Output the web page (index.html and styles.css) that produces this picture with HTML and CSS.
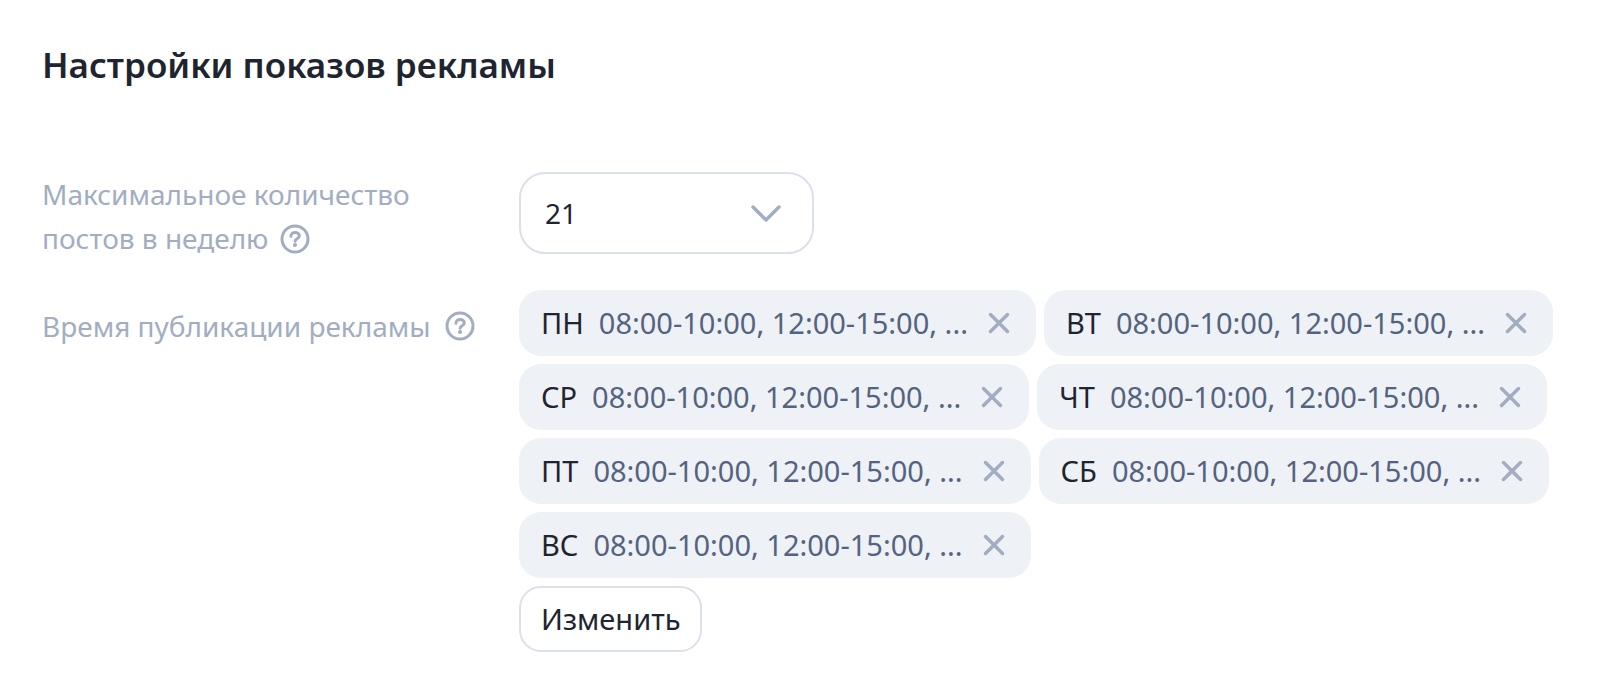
FILE: index.html
```html
<!DOCTYPE html>
<html lang="ru">
<head>
<meta charset="utf-8">
<meta name="viewport" content="width=device-width, initial-scale=1">
<title>Настройки показов рекламы</title>
<link rel="stylesheet" href="styles.css">
</head>
<body>
<svg class="sprite" aria-hidden="true">
  <symbol id="cross" viewBox="0 0 22 22"><path stroke-width="3.500" d="M2.500 2.500l17 17M19.500 2.500l-17 17"/></symbol>
  <symbol id="help" viewBox="0 0 30 30"><circle cx="15" cy="15" r="13"/><path d="M10.900 12.200c0-2.200 1.800-3.700 4.200-3.700s4.200 1.400 4.200 3.400c0 2.800-4.200 2.700-4.200 5.300"/><circle class="dot" cx="15" cy="21" r="2.100"/></symbol>
</svg>
<main class="settings">
  <h1 class="title">Настройки показов рекламы</h1>
  <div class="form">
    <div class="label label-limit">
      <label for="limit">Максимальное количество постов в неделю</label>
      <button class="icon-button help" type="button" aria-label="Подсказка"><svg><use href="#help"/></svg></button>
    </div>
    <div class="select-box">
      <select class="select" id="limit"><option>21</option></select>
      <svg class="chevron" viewBox="0 0 32 20" aria-hidden="true"><path stroke-width="3.500" d="M3 3l13 13L29 3"/></svg>
    </div>
    <div class="label label-time">
      <span id="time-label">Время публикации рекламы</span>
      <button class="icon-button help" type="button" aria-label="Подсказка"><svg><use href="#help"/></svg></button>
    </div>
    <div class="schedule" role="group" aria-labelledby="time-label">
      <ul class="chips">
        <li class="chip"><span class="day">ПН</span><span class="hours">08:00-10:00, 12:00-15:00, ...</span><button class="icon-button cross" type="button" aria-label="Удалить ПН"><svg><use href="#cross"/></svg></button></li>
        <li class="chip"><span class="day">ВТ</span><span class="hours">08:00-10:00, 12:00-15:00, ...</span><button class="icon-button cross" type="button" aria-label="Удалить ВТ"><svg><use href="#cross"/></svg></button></li>
        <li class="chip"><span class="day">СР</span><span class="hours">08:00-10:00, 12:00-15:00, ...</span><button class="icon-button cross" type="button" aria-label="Удалить СР"><svg><use href="#cross"/></svg></button></li>
        <li class="chip"><span class="day">ЧТ</span><span class="hours">08:00-10:00, 12:00-15:00, ...</span><button class="icon-button cross" type="button" aria-label="Удалить ЧТ"><svg><use href="#cross"/></svg></button></li>
        <li class="chip"><span class="day">ПТ</span><span class="hours">08:00-10:00, 12:00-15:00, ...</span><button class="icon-button cross" type="button" aria-label="Удалить ПТ"><svg><use href="#cross"/></svg></button></li>
        <li class="chip"><span class="day">СБ</span><span class="hours">08:00-10:00, 12:00-15:00, ...</span><button class="icon-button cross" type="button" aria-label="Удалить СБ"><svg><use href="#cross"/></svg></button></li>
        <li class="chip"><span class="day">ВС</span><span class="hours">08:00-10:00, 12:00-15:00, ...</span><button class="icon-button cross" type="button" aria-label="Удалить ВС"><svg><use href="#cross"/></svg></button></li>
      </ul>
      <button class="edit" type="button">Изменить</button>
    </div>
  </div>
</main>
</body>
</html>
```
FILE: styles.css
```css
* {
  box-sizing: border-box;
}

body {
  margin: 0;
  background: #fff;
  color: #1f2530;
  font-family: "Noto Sans", "Open Sans", sans-serif;
  font-size: 28px;
  line-height: 44px;
}

.sprite {
  position: absolute;
  width: 0;
  height: 0;
}

svg {
  display: block;
  fill: none;
  stroke: #a2adc2;
  stroke-width: 3;
  stroke-linecap: round;
  stroke-linejoin: round;
}

.settings {
  padding: 41px 42px;
}

.title {
  margin: 0 0 83px;
  font-size: 35px;
  font-weight: 600;
  line-height: 48px;
}

.form {
  display: grid;
  grid-template-columns: 437px 1fr;
  column-gap: 40px;
  row-gap: 30px;
  align-items: start;
}

.label {
  color: #a2adc2;
}

.label-limit {
  max-width: 400px;
}

.label-time {
  display: flex;
  align-items: center;
  padding-top: 14px;
  white-space: nowrap;
}

.icon-button {
  flex: none;
  margin: 0;
  padding: 0;
  border: 0;
  background: none;
  cursor: pointer;
}

.icon-button svg {
  width: 100%;
  height: 100%;
}

.help {
  display: inline-block;
  width: 30px;
  height: 30px;
  margin-left: 4px;
  vertical-align: -5px;
}

.label-time .help {
  margin-left: 14px;
}

.dot {
  fill: #a2adc2;
  stroke: none;
}

.select-box {
  position: relative;
  width: 295px;
}

.select {
  display: block;
  width: 100%;
  height: 82px;
  padding: 0 24px;
  border: 2px solid #dce0eb;
  border-radius: 26px;
  appearance: none;
  background: #fff;
  color: inherit;
  font: inherit;
}

.chevron {
  position: absolute;
  top: 32px;
  right: 32px;
  width: 32px;
  height: 20px;
  pointer-events: none;
}

.schedule {
  display: flex;
  flex-direction: column;
  align-items: flex-start;
  gap: 8px;
  font-size: 29px;
}

.chips {
  display: flex;
  flex-wrap: wrap;
  gap: 8px;
  margin: 0;
  padding: 0;
  list-style: none;
}

.chip {
  display: flex;
  align-items: center;
  height: 66px;
  padding: 0 26px 0 22px;
  border-radius: 22px;
  background: #eef1f6;
  white-space: nowrap;
}

.hours {
  margin-left: 15px;
  color: #546380;
}

.cross {
  width: 22px;
  height: 22px;
  margin-left: 20px;
}

.edit {
  height: 66px;
  padding: 0 20px;
  border: 2px solid #dce0eb;
  border-radius: 22px;
  background: #fff;
  color: inherit;
  font: inherit;
  cursor: pointer;
}
```
